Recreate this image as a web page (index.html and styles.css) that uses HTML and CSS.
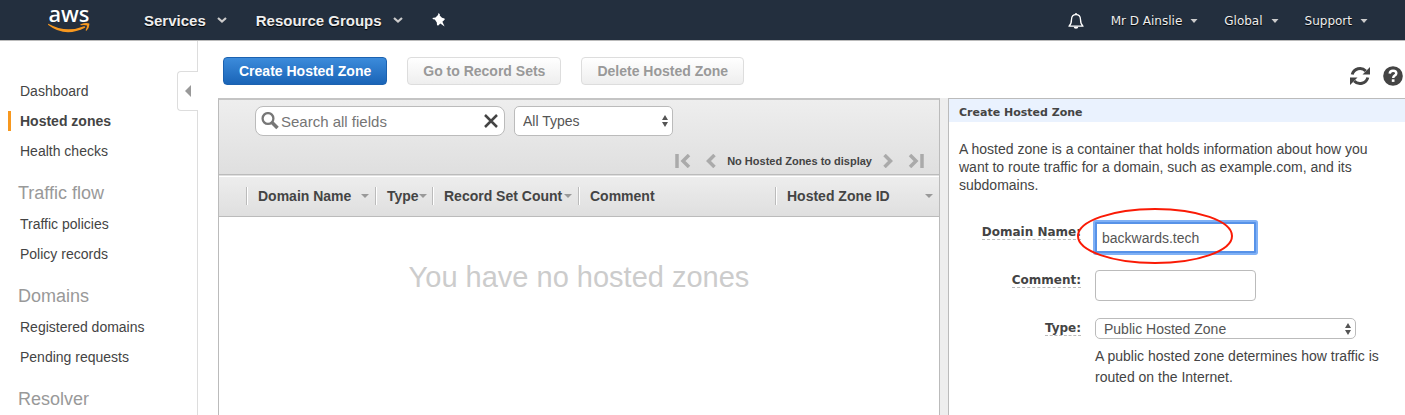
FILE: index.html
```html
<!DOCTYPE html>
<html lang="en">
<head>
<meta charset="utf-8">
<title>Hosted zones</title>
<link rel="stylesheet" href="styles.css">
</head>
<body>
<header class="topbar">
  <a class="logo" href="#">
    <span class="logo-text">aws</span>
    <svg class="logo-smile" viewBox="0 0 42 10" width="42" height="10" aria-hidden="true"><path d="M0.300 0.800Q18 10.500 36 3.200Q38 3.600 37 4.800Q17 15 0.300 2Q-0.300 1 0.300 0.800Z" fill="#f7981f"/><path d="M32.500 1.300Q38-0.800 41.300 0.500Q41.800 4 38.500 7.800Q37.300 8 37.800 6.700Q39.300 3.500 38.900 2.500Q37 1.800 33 2.300Q32 2 32.500 1.300Z" fill="#f7981f"/></svg>
  </a>
  <nav class="menu">
    <button class="menu-item" type="button">Services <svg viewBox="0 0 10 6" width="10" height="6" aria-hidden="true"><path d="M1 1l4 3.500L9 1" fill="none" stroke="#ccc" stroke-width="2.200"/></svg></button>
    <button class="menu-item" type="button">Resource Groups <svg viewBox="0 0 10 6" width="10" height="6" aria-hidden="true"><path d="M1 1l4 3.500L9 1" fill="none" stroke="#ccc" stroke-width="2.200"/></svg></button>
    <button class="menu-item" type="button" aria-label="Pin shortcuts"><svg viewBox="0 0 14 14" width="14" height="14" aria-hidden="true"><path d="M6.500 0L7.900 1.200L7.700 2.500L10 4.800L12.500 5.400L12.800 6.600L10.400 8.800L12.600 13.500L8.300 10.500L6.300 12.500L5 12.200L4.800 9.500L2.800 6.500L1.200 6.300L0.300 4.900L3.500 4.500L6 2Z" fill="#fff"/></svg></button>
  </nav>
  <nav class="account">
    <button class="account-item" type="button" aria-label="Notifications"><svg viewBox="0 0 18 18" width="18" height="18" aria-hidden="true"><path d="M2 14.200Q4.500 12 4.500 7.500Q4.700 2.700 9 2.700T13.500 7.500Q13.500 12 16 14.200Z" fill="none" stroke="#fff" stroke-width="1.300" stroke-linejoin="round"/><path d="M7.700 2.500a1.300 1.500 0 0 1 2.600 0M6.700 14.800a2.300 2 0 0 0 4.600 0z" fill="#fff"/></svg></button>
    <button class="account-item" type="button">Mr D Ainslie <svg viewBox="0 0 8 4" width="8" height="4" aria-hidden="true"><path d="M0.500 0h7L4 4z" fill="#ccc"/></svg></button>
    <button class="account-item" type="button">Global <svg viewBox="0 0 8 4" width="8" height="4" aria-hidden="true"><path d="M0.500 0h7L4 4z" fill="#ccc"/></svg></button>
    <button class="account-item" type="button">Support <svg viewBox="0 0 8 4" width="8" height="4" aria-hidden="true"><path d="M0.500 0h7L4 4z" fill="#ccc"/></svg></button>
  </nav>
</header>

<div class="page">
  <aside class="sidebar">
    <button class="collapse" type="button" aria-label="Collapse navigation"><svg viewBox="0 0 6 12" width="6" height="12" aria-hidden="true"><path d="M6 0v12L0 6z" fill="#999"/></svg></button>
    <nav class="side-nav">
      <a class="side-link" href="#">Dashboard</a>
      <a class="side-link current" href="#">Hosted zones</a>
      <a class="side-link" href="#">Health checks</a>
      <h2 class="side-heading">Traffic flow</h2>
      <a class="side-link" href="#">Traffic policies</a>
      <a class="side-link" href="#">Policy records</a>
      <h2 class="side-heading">Domains</h2>
      <a class="side-link" href="#">Registered domains</a>
      <a class="side-link" href="#">Pending requests</a>
      <h2 class="side-heading">Resolver</h2>
    </nav>
  </aside>

  <main class="main">
    <div class="actions">
      <button class="btn primary" type="button">Create Hosted Zone</button>
      <button class="btn" type="button" disabled>Go to Record Sets</button>
      <button class="btn" type="button" disabled>Delete Hosted Zone</button>
      <div class="tools">
        <button class="tool" type="button" aria-label="Refresh"><svg viewBox="0 0 20 20" width="20" height="20" aria-hidden="true"><path d="M2.200 8.500A8 8 0 0 1 15.800 5M17.800 11.500A8 8 0 0 1 4.200 15" fill="none" stroke="#444" stroke-width="3"/><path d="M20 1v7.500h-7.500zM0 19v-7.500h7.500z" fill="#444"/></svg></button>
        <button class="tool" type="button" aria-label="Help"><svg viewBox="0 0 20 20" width="20" height="20" aria-hidden="true"><circle cx="10" cy="10" r="9.800" fill="#444"/><path d="M6.700 7.700Q7 4.700 10 4.700Q13.300 4.700 13.300 7.300Q13.300 8.700 11.600 9.700Q10.300 10.500 10.200 12" fill="none" stroke="#fff" stroke-width="2.500"/><path d="M8.800 13.300h2.700v2.600H8.800z" fill="#fff"/></svg></button>
      </div>
    </div>

    <div class="panes">
      <section class="zones">
        <div class="filters">
          <div class="search">
            <svg viewBox="0 0 18 18" width="18" height="18" aria-hidden="true"><circle cx="7" cy="6.500" r="5.400" fill="none" stroke="#777" stroke-width="2.300"/><path d="M11 10.500l5.500 5.500" stroke="#777" stroke-width="3.600"/></svg>
            <input class="search-input" type="text" placeholder="Search all fields" aria-label="Search all fields">
            <button class="clear" type="button" aria-label="Clear search"><svg viewBox="0 0 14 14" width="14" height="14" aria-hidden="true"><path d="M1 1l12 12M13 1L1 13" stroke="#444" stroke-width="2.500"/></svg></button>
          </div>
          <div class="picker filter-picker">
            <select class="select" aria-label="Zone type"><option>All Types</option></select>
            <svg class="picker-arrows" viewBox="0 0 6 12" width="6" height="12" aria-hidden="true"><path d="M0 5l3-5 3 5zM0 7l3 5 3-5z" fill="#555"/></svg>
          </div>
        </div>
        <div class="pager">
          <button class="page-btn" type="button" aria-label="First page"><svg viewBox="0 0 16 14" width="16" height="14" aria-hidden="true"><path d="M2 0v14M14 1L8 7l6 6" fill="none" stroke="#aaa" stroke-width="3.500"/></svg></button>
          <button class="page-btn" type="button" aria-label="Previous page"><svg viewBox="0 0 10 14" width="10" height="14" aria-hidden="true"><path d="M8.500 1l-6 6 6 6" fill="none" stroke="#aaa" stroke-width="3.500"/></svg></button>
          <span class="pager-text">No Hosted Zones to display</span>
          <button class="page-btn" type="button" aria-label="Next page"><svg viewBox="0 0 10 14" width="10" height="14" aria-hidden="true"><path d="M1.500 1l6 6-6 6" fill="none" stroke="#aaa" stroke-width="3.500"/></svg></button>
          <button class="page-btn" type="button" aria-label="Last page"><svg viewBox="0 0 16 14" width="16" height="14" aria-hidden="true"><path d="M14 0v14M2 1l6 6-6 6" fill="none" stroke="#aaa" stroke-width="3.500"/></svg></button>
        </div>
        <table class="zone-table">
          <colgroup><col class="c-check"><col class="c-domain"><col class="c-type"><col class="c-count"><col class="c-comment"><col></colgroup>
          <thead>
            <tr>
              <td></td>
              <th scope="col"><div class="col-head">Domain Name <i class="sort"></i></div></th>
              <th scope="col"><div class="col-head">Type <i class="sort"></i></div></th>
              <th scope="col"><div class="col-head">Record Set Count <i class="sort"></i></div></th>
              <th scope="col"><div class="col-head">Comment</div></th>
              <th scope="col"><div class="col-head">Hosted Zone ID <i class="sort"></i></div></th>
            </tr>
          </thead>
          <tbody><tr><td class="empty" colspan="6">You have no hosted zones</td></tr></tbody>
        </table>
      </section>

      <section class="details">
        <h2 class="details-title">Create Hosted Zone</h2>
        <form class="details-body">
          <p class="intro">A hosted zone is a container that holds information about how you want to route traffic for a domain, such as example.com, and its subdomains.</p>
          <div class="fields">
            <label class="label" for="domain">Domain Name:</label>
            <div class="marked">
              <input class="field focused" id="domain" type="text" value="backwards.tech">
              <svg class="ring" viewBox="0 0 158 58" width="158" height="58" aria-hidden="true"><ellipse cx="79" cy="29" rx="77" ry="27" fill="none" stroke="#fa1a05" stroke-width="2"/></svg>
            </div>
            <label class="label" for="comment">Comment:</label>
            <input class="field" id="comment" type="text">
            <label class="label" for="type">Type:</label>
            <div>
              <div class="picker type-picker">
                <select class="select" id="type"><option>Public Hosted Zone</option></select>
                <svg class="picker-arrows" viewBox="0 0 6 12" width="6" height="12" aria-hidden="true"><path d="M0 5l3-5 3 5zM0 7l3 5 3-5z" fill="#555"/></svg>
              </div>
              <p class="hint">A public hosted zone determines how traffic is routed on the Internet.</p>
            </div>
          </div>
        </form>
      </section>
    </div>
  </main>
</div>
</body>
</html>
```
FILE: styles.css
```css
* { box-sizing: border-box; }

body {
  margin: 0;
  height: 100vh;
  overflow: hidden;
  display: flex;
  flex-direction: column;
  font-family: "Liberation Sans", Arial, sans-serif;
  font-size: 14px;
  color: #444;
  background: #fff;
}

button, input, select { font: inherit; color: inherit; margin: 0; }
button { border: 0; background: none; padding: 0; }
a { color: inherit; text-decoration: none; }
svg { display: block; flex: none; }
p, h2 { margin: 0; font-weight: normal; }

/* Top bar */
.topbar {
  display: flex;
  align-items: center;
  flex: none;
  height: 41px;
  padding: 0 37px 0 48px;
  background: #232f3e;
  border-bottom: 1px solid #bbb;
  color: #eee;
}
.logo { width: 42px; margin-right: 54px; padding-bottom: 3px; }
.logo-text {
  display: block;
  height: 18px;
  line-height: 16px;
  text-align: center;
  font-family: "Noto Sans", sans-serif;
  font-size: 22px;
  font-weight: 500;
  color: #fff;
}
.menu { display: flex; gap: 29px; }
.menu-item {
  display: flex;
  align-items: center;
  gap: 11px;
  font-size: 15px;
  font-weight: bold;
  text-shadow: 0 1px 1px #000;
}
.account { display: flex; align-items: center; gap: 26px; margin-left: auto; }
.account-item {
  display: flex;
  align-items: center;
  gap: 8px;
  padding-top: 1px;
  font-family: "DejaVu Sans", Verdana, sans-serif;
  font-size: 12px;
  text-shadow: 0 1px 1px #000;
}

/* Sidebar */
.page { display: flex; flex: 1; min-height: 0; }
.sidebar {
  position: relative;
  flex: none;
  width: 198px;
  padding-top: 35px;
  border-right: 1px solid #ddd;
}
.collapse {
  position: absolute;
  top: 30px;
  right: -1px;
  width: 21px;
  height: 40px;
  padding-left: 7px;
  border: 1px solid #ddd;
  border-right: 0;
  border-radius: 4px 0 0 4px;
  background: #fff;
}
.side-nav { display: flex; flex-direction: column; }
.side-link {
  margin: 5px 0 5px 8px;
  padding-left: 9px;
  line-height: 20px;
  border-left: 3px solid transparent;
}
.side-link.current { border-color: #f7981f; font-weight: bold; }
.side-heading {
  padding: 16px 0 5px 18px;
  font-size: 18px;
  line-height: 22px;
  color: #999;
}
.side-heading:last-child { padding-bottom: 0; }

/* Action row */
.main { display: flex; flex-direction: column; flex: 1; min-width: 0; padding-left: 20px; }
.actions { display: flex; gap: 20px; padding: 16px 2px 13px 5px; }
.btn {
  height: 28px;
  padding: 0 15px;
  border: 1px solid #ddd;
  border-radius: 4px;
  background: linear-gradient(#fff, #eee);
  color: #999;
  font-weight: bold;
}
.btn.primary {
  border-color: #1c62b0;
  background: linear-gradient(#3c8bdb, #1a64b7);
  color: #fff;
}
.tools { display: flex; align-items: flex-end; gap: 13px; height: 29px; margin: 0 0 -1px auto; }

/* Zone list */
.panes { display: flex; flex: 1; min-height: 0; }
.zones {
  display: flex;
  flex-direction: column;
  flex: 1;
  min-width: 0;
  border: 1px solid #bbb;
  border-top: 2px solid #c4c4c4;
  border-bottom: 0;
  background: linear-gradient(#eee, #dfdfdf 74px, #fff 74px);
}
.filters { display: flex; gap: 9px; padding: 6px 36px 0; }
.search {
  display: flex;
  align-items: center;
  gap: 2px;
  width: 250px;
  height: 30px;
  padding: 0 6px 0 5px;
  border: 1px solid #bbb;
  border-radius: 8px;
  background: #fff;
}
.search-input {
  flex: 1;
  min-width: 0;
  padding: 0;
  border: 0;
  background: none;
  font-size: 15px;
}
.search-input::placeholder { color: #757575; }
.picker { position: relative; }
.select {
  width: 100%;
  height: 100%;
  padding: 0 8px;
  border: 1px solid #bbb;
  border-radius: 5px;
  background: #fff;
  color: #555;
  appearance: none;
}
.picker-arrows {
  position: absolute;
  top: 50%;
  right: 5px;
  margin-top: -6px;
  pointer-events: none;
}
.filter-picker { width: 159px; height: 30px; }
.pager {
  display: flex;
  align-items: center;
  justify-content: flex-end;
  gap: 11px;
  height: 38px;
  padding: 12px 15px 0 0;
}
.page-btn:first-child { margin-right: 4px; }
.page-btn:last-child { margin-left: 4px; }
.pager-text { font-size: 11px; font-weight: bold; }

.zone-table { width: 100%; table-layout: fixed; border-collapse: collapse; }
.c-check { width: 27px; }
.c-domain { width: 129px; }
.c-type { width: 57px; }
.c-count { width: 146px; }
.c-comment { width: 197px; }
.zone-table thead {
  height: 42px;
  background: linear-gradient(#fff 1px, #ededed 1px, #dfdfdf);
  border-top: 1px solid #bbb;
  border-bottom: 1px solid #bbb;
}
.zone-table th { padding: 0; text-align: left; }
.col-head {
  display: flex;
  align-items: center;
  justify-content: space-between;
  padding: 0 4px 0 11px;
  line-height: 18px;
  white-space: nowrap;
  border-left: 1px solid #bbb;
  box-shadow: inset 1px 0 #fff;
}
.sort {
  margin-right: 2px;
  border: 4px solid transparent;
  border-top-color: #999;
  border-bottom: 0;
}
.empty {
  padding: 43px 0 0;
  text-align: center;
  font-size: 29px;
  line-height: 34px;
  color: #ccc;
}

/* Details */
.details {
  display: flex;
  flex-direction: column;
  flex: none;
  width: 465px;
  border-left: 8px solid #eee;
}
.details-title {
  padding: 5px 10px 0;
  border-top: 1px solid #bbb;
  border-left: 1px solid #bbb;
  background: #eaf2fe;
  font-family: "DejaVu Sans", Verdana, sans-serif;
  font-size: 11px;
  font-weight: bold;
  line-height: 18px;
}
.details-body { flex: 1; padding: 18px 20px 0 10px; border-left: 1px solid #bbb; }
.intro { line-height: 18px; }
.fields {
  display: grid;
  grid-template-columns: 122px 1fr;
  align-items: start;
  gap: 17px 14px;
  margin-top: 28px;
}
.label {
  justify-self: end;
  margin-top: 3px;
  border-bottom: 1px dashed #bbb;
  font-family: "DejaVu Sans", Verdana, sans-serif;
  font-size: 12px;
  font-weight: bold;
  line-height: 14px;
}
.marked { position: relative; }
.field {
  display: block;
  width: 161px;
  height: 31px;
  padding: 0 7px;
  border: 1px solid #bbb;
  border-radius: 4px;
  background: #fff;
  color: #555;
}
.field:focus, .field.focused {
  border: 2px solid #5792e8;
  border-radius: 1px;
  padding: 0 5px;
  outline: 0;
  box-shadow: 0 0 0 2px #7fb0f5;
}
.ring { position: absolute; top: -15px; left: -19px; pointer-events: none; }
.type-picker { width: 261px; height: 21px; }
.hint { margin-top: 7px; line-height: 21px; }
```
